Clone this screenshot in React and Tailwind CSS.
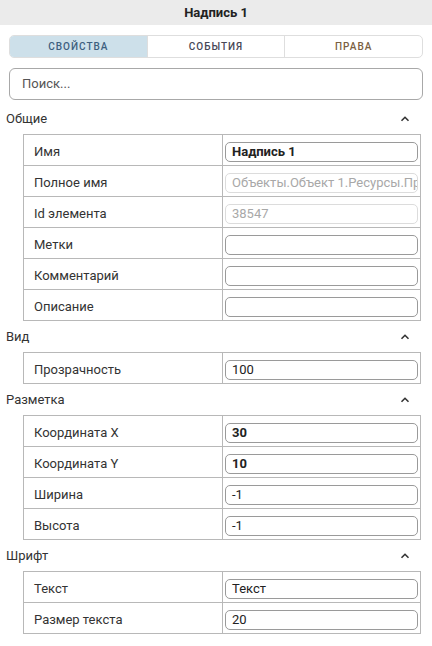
import React from 'react';

const sections = [
  {
    title: 'Общие',
    rows: [
      { label: 'Имя', value: 'Надпись 1', bold: true },
      { label: 'Полное имя', value: 'Объекты.Объект 1.Ресурсы.Пр', disabled: true },
      { label: 'Id элемента', value: '38547', disabled: true },
      { label: 'Метки', value: '' },
      { label: 'Комментарий', value: '' },
      { label: 'Описание', value: '' },
    ],
  },
  {
    title: 'Вид',
    rows: [{ label: 'Прозрачность', value: '100' }],
  },
  {
    title: 'Разметка',
    rows: [
      { label: 'Координата X', value: '30', bold: true },
      { label: 'Координата Y', value: '10', bold: true },
      { label: 'Ширина', value: '-1' },
      { label: 'Высота', value: '-1' },
    ],
  },
  {
    title: 'Шрифт',
    rows: [
      { label: 'Текст', value: 'Текст' },
      { label: 'Размер текста', value: '20' },
    ],
  },
];

function Chevron() {
  return (
    <svg width="10" height="10" viewBox="0 0 10 10" className="text-[#333]">
      <path d="M1.5 6.8 L5 3.3 L8.5 6.8" fill="none" stroke="currentColor" strokeWidth="1.6" />
    </svg>
  );
}

function PropRow({ row }) {
  return (
    <div className="flex h-[31px] pt-[3px] border-b border-[#b8b8b8]">
      <div className="w-[198px] shrink-0 pl-[10px] flex items-center text-[13px] text-[#333]">
        {row.label}
      </div>
      <div className="-mt-[3px] w-px bg-[#b8b8b8]" />
      <div className="flex-1 min-w-0 flex items-center pl-[2px] pr-[2px]">
        <div
          className={
            'h-[20px] w-full rounded-[5px] border px-[6px] flex items-center text-[13px] overflow-hidden whitespace-nowrap ' +
            (row.disabled ? 'border-[#dcdcdc] text-[#a8a8a8]' : 'border-[#9a9a9a] text-[#222]') +
            (row.bold ? ' font-bold' : '')
          }
        >
          {row.value}
        </div>
      </div>
    </div>
  );
}

export default function App() {
  return (
    <div className="w-[432px] h-[646px] bg-white overflow-hidden" style={{ fontFamily: 'Roboto, "Liberation Sans", sans-serif' }}>
      <div className="h-[25px] bg-[#ebebeb] flex items-center justify-center text-[13px] font-bold text-[#222]">
        Надпись 1
      </div>

      <div className="px-[9px] pt-[10px]">
        <div className="flex h-[23px] rounded-[5px] border border-[#dedede] overflow-hidden text-[10px] font-medium tracking-[1px]">
          <div className="flex-1 bg-[#cde0ea] text-[#3d5f7f] flex items-center justify-center">СВОЙСТВА</div>
          <div className="flex-1 border-l border-[#dedede] text-[#474757] flex items-center justify-center">СОБЫТИЯ</div>
          <div className="flex-1 border-l border-[#dedede] text-[#7a6042] flex items-center justify-center">ПРАВА</div>
        </div>

        <div className="mt-[10px] h-[32px] rounded-[6px] border border-[#a8a8a8] flex items-center px-[12px] text-[13px] text-[#555]">
          Поиск...
        </div>
      </div>

      <div className="mt-[3px]">
        {sections.map((s) => (
          <div key={s.title}>
            <div className="h-[31px] flex items-center justify-between pl-[6px] pr-[22px] text-[13px] text-[#333]">
              <span>{s.title}</span>
              <Chevron />
            </div>
            <div className="ml-[23px] mr-[11px] border-t border-l border-r border-[#b8b8b8]">
              {s.rows.map((r) => (
                <PropRow key={r.label} row={r} />
              ))}
            </div>
          </div>
        ))}
      </div>
    </div>
  );
}
